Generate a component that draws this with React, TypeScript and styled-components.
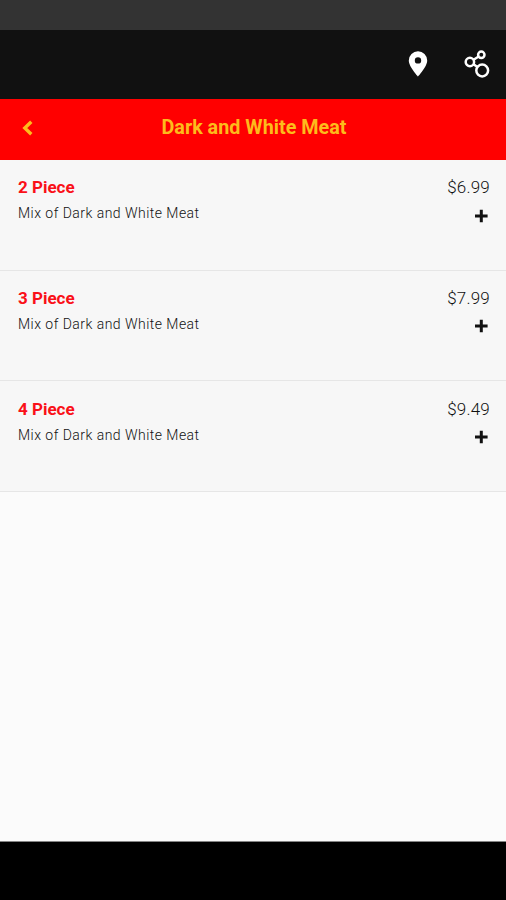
import React from "react";
import styled, { createGlobalStyle } from "styled-components";

const GlobalStyle = createGlobalStyle`
  * { box-sizing: border-box; }
  body { margin: 0; background: #fbfbfb; font-family: Roboto, sans-serif; }
`;

const Screen = styled.div`
  display: flex;
  flex-direction: column;
  width: 506px;
  height: 900px;
  background: #fbfbfb;
  overflow: hidden;
`;

const StatusBar = styled.div`
  height: 30px;
  background: #333;
`;

const TopBar = styled.header`
  display: flex;
  justify-content: flex-end;
  align-items: flex-start;
  gap: 36px;
  height: 69px;
  padding: 20px 16px 0 0;
  background: #111;
`;

const IconButton = styled.button`
  display: flex;
  padding: 0;
  border: 0;
  background: none;
  color: #fff;
`;

const TitleBar = styled.div`
  display: grid;
  grid-template-columns: 54px 1fr 52px;
  height: 61px;
  padding-bottom: 4px;
  align-items: center;
  background: #f00;
`;

const BackButton = styled(IconButton)`
  justify-content: center;
  padding-top: 1px;
`;

const Title = styled.h1`
  margin: 0;
  color: #fdbb1c;
  font-size: 19.8px;
  line-height: 24px;
  font-weight: 700;
  text-align: center;
  white-space: nowrap;
`;

const Menu = styled.main`
  flex: 1;
`;

const Item = styled.article`
  display: flex;
  justify-content: space-between;
  height: 110.7px;
  padding: 16.4px 16px 0 18px;
  background: #f7f7f7;
  border-bottom: 1px solid #e6e6e6;
`;

const Name = styled.h2`
  margin: 0;
  color: #fa1018;
  font-size: 17px;
  line-height: 22px;
  font-weight: 700;
`;

const Description = styled.p`
  margin: 5px 0 0;
  color: #111;
  font-size: 14px;
  font-weight: 300;
  letter-spacing: 0.47px;
  line-height: 20px;
`;

const Side = styled.div`
  display: flex;
  flex-direction: column;
  align-items: flex-end;
`;

const Price = styled.span`
  color: #111;
  font-size: 17px;
  font-weight: 300;
  letter-spacing: 0.2px;
  line-height: 22px;
`;

const AddButton = styled(IconButton)`
  margin: 10.4px 2px 0 0;
  color: #111;
`;

const NavBar = styled.footer`
  height: 59px;
  background: #000;
  border-top: 1px solid #858585;
`;

const items = [
  { name: "2 Piece", price: "$6.99" },
  { name: "3 Piece", price: "$7.99" },
  { name: "4 Piece", price: "$9.49" },
];

export default function App() {
  return (
    <Screen>
      <GlobalStyle />
      <StatusBar />
      <TopBar>
        <IconButton aria-label="Location">
          <svg width="20" height="28" viewBox="0 0 20 28">
            <path fill="currentColor" fillRule="evenodd" d="M10 1.300a9.200 9.200 0 0 0-9.200 9.200C.8 16.800 10 26.500 10 26.500S19.200 16.800 19.200 10.500A9.200 9.200 0 0 0 10 1.300zm0 5.900a3.200 3.200 0 1 1 0 6.400 3.200 3.200 0 0 1 0-6.400z" />
          </svg>
        </IconButton>
        <IconButton aria-label="Share">
          <svg width="26" height="28" viewBox="0 0 26 28" fill="none" stroke="currentColor" strokeWidth="2.500">
            <circle cx="17.300" cy="4.800" r="3.200" />
            <circle cx="5.900" cy="12" r="4.200" />
            <circle cx="18.200" cy="20.500" r="5.900" />
            <path d="M9.600 9.700l5-3.200M9.500 14.200l4 2.900" />
          </svg>
        </IconButton>
      </TopBar>
      <TitleBar>
        <BackButton aria-label="Back">
          <svg width="14" height="18" viewBox="0 0 14 18" fill="none" stroke="#fdbb1c" strokeWidth="3.400">
            <path d="M11.300 2.700L4.800 9l6.500 6.300" />
          </svg>
        </BackButton>
        <Title>Dark and White Meat</Title>
      </TitleBar>
      <Menu>
        {items.map((item) => (
          <Item key={item.name}>
            <div>
              <Name>{item.name}</Name>
              <Description>Mix of Dark and White Meat</Description>
            </div>
            <Side>
              <Price>{item.price}</Price>
              <AddButton aria-label={`Add ${item.name}`}>
                <svg width="14" height="14" viewBox="0 0 14 14" stroke="currentColor" strokeWidth="3">
                  <path d="M7.300 .7v12.600M1 7h12.600" />
                </svg>
              </AddButton>
            </Side>
          </Item>
        ))}
      </Menu>
      <NavBar />
    </Screen>
  );
}
